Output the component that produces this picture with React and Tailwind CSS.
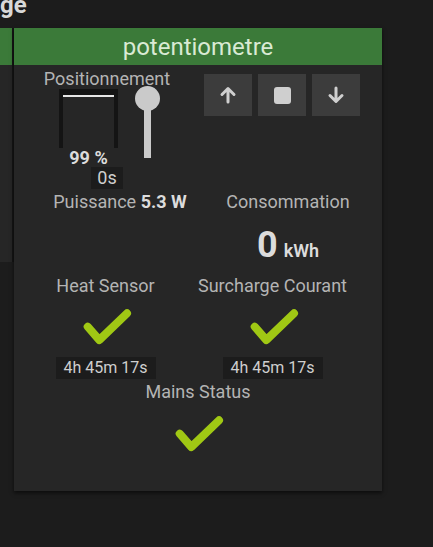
import React from 'react';

const font = { fontFamily: 'Roboto, "Noto Sans", sans-serif' };

// green check used by the status widgets
const Check = ({ className = '' }) => (
    <svg className={className} width="52" height="44" viewBox="0 0 52 44" fill="none">
        <polyline
            points="7.7,22.7 19.3,36 47,9.3"
            stroke="#a0c814"
            strokeWidth="8"
            strokeLinecap="round"
            strokeLinejoin="round"
        />
    </svg>
);

const Arrow = ({ down }) => (
    <svg width="18" height="18" viewBox="0 0 18 18" fill="none" className={down ? 'rotate-180' : ''}>
        <path d="M9 16V3M3 8.5L9 2.5l6 6" stroke="#cfcfcf" strokeWidth="3" strokeLinecap="round" strokeLinejoin="round" />
    </svg>
);

const TimeBadge = ({ children }) => (
    <div className="bg-[#1c1c1c] h-[22px] px-[8px] text-[16px] leading-[22px] text-[#cfcfcf]">{children}</div>
);

export default function App() {
    return (
        <div className="w-[433px] h-[547px] bg-[#1c1c1c] overflow-hidden" style={font}>
            {/* page title, cut off on the left */}
            <div className="h-[28px] flex flex-col">
                <div className="-mt-[7px] text-[24px] leading-[24px] font-bold text-[#d8d8d8]">ge</div>
            </div>

            <div className="flex items-start">
                {/* neighbouring card, mostly off screen */}
                <div className="w-[14px] h-[234px] flex flex-col border-r-2 border-[#141414]">
                    <div className="h-[37px] bg-[#3b7a39]" />
                    <div className="flex-1 bg-[#262626]" />
                </div>

                <div className="w-[368px] h-[463px] bg-[#262626] shadow-[0_2px_4px_rgba(0,0,0,0.6)]">
                    <div className="h-[37px] bg-[#3b7a39] flex items-center justify-center text-[24px] text-[#d9ead4]">
                        potentiometre
                    </div>

                    {/* position row */}
                    <div className="flex">
                        <div className="w-[170px] ml-[8px] pt-[3px] flex flex-col items-center">
                            <div className="text-[18px] leading-[21px] text-[#b4b4b4]">Positionnement</div>
                            <div className="flex w-full">
                                <div className="ml-[37px] flex flex-col items-center">
                                    <div className="w-[59px] h-[59px] border-x-4 border-t-[6px] border-[#141414]">
                                        <div className="h-[2px] bg-[#e6e6e6]" />
                                    </div>
                                    <div className="text-[18px] leading-[19px] font-bold text-[#dcdcdc]">99 %</div>
                                </div>
                                <div className="ml-[17px] -mt-[3px] w-[25px] flex flex-col items-center">
                                    <div className="w-[25px] h-[25px] rounded-full bg-[#cacaca]" />
                                    <div className="w-[7px] h-[48px] -mt-[1px] bg-[#cacaca]" />
                                </div>
                            </div>
                            <div className="bg-[#1c1c1c] h-[22px] w-[32px] text-center text-[18px] leading-[22px] text-[#cfcfcf]">0s</div>
                        </div>

                        <div className="ml-[12px] mt-[9px] flex gap-[6px]">
                            <button className="w-[48px] h-[42px] bg-[#3c3c3c] flex items-center justify-center">
                                <Arrow />
                            </button>
                            <button className="w-[48px] h-[42px] bg-[#3c3c3c] flex items-center justify-center">
                                <div className="w-[17px] h-[17px] rounded-[3px] bg-[#cfcfcf]" />
                            </button>
                            <button className="w-[48px] h-[42px] bg-[#3c3c3c] flex items-center justify-center">
                                <Arrow down />
                            </button>
                        </div>
                    </div>

                    {/* power and consumption */}
                    <div className="ml-[22px] w-[336px] mt-[2px] grid grid-cols-2 text-[18px] leading-[21px]">
                        <div className="text-center text-[#b4b4b4]">
                            Puissance <span className="font-bold text-[#dcdcdc]">5.3 W</span>
                        </div>
                        <div className="flex flex-col items-center">
                            <div className="text-[#b4b4b4]">Consommation</div>
                            <div className="mt-[15px] flex items-baseline text-[#dcdcdc] font-bold">
                                <span className="text-[36px] leading-[36px]">0</span>
                                <span className="ml-[6px] text-[18px] font-semibold">kWh</span>
                            </div>
                        </div>
                    </div>

                    {/* sensors */}
                    <div className="ml-[8px] w-[334px] mt-[12px] grid grid-cols-2 text-[18px] leading-[21px] text-[#b4b4b4]">
                        <div className="flex flex-col items-center">
                            <div>Heat Sensor</div>
                            <Check className="mt-[8px]" />
                            <div className="mt-[9px]"><TimeBadge>4h 45m 17s</TimeBadge></div>
                        </div>
                        <div className="flex flex-col items-center">
                            <div>Surcharge Courant</div>
                            <Check className="mt-[8px]" />
                            <div className="mt-[9px]"><TimeBadge>4h 45m 17s</TimeBadge></div>
                        </div>
                    </div>

                    <div className="mt-[2px] flex flex-col items-center text-[18px] leading-[21px] text-[#b4b4b4]">
                        <div>Mains Status</div>
                        <Check className="mt-[9px]" />
                    </div>
                </div>
            </div>
        </div>
    );
}
